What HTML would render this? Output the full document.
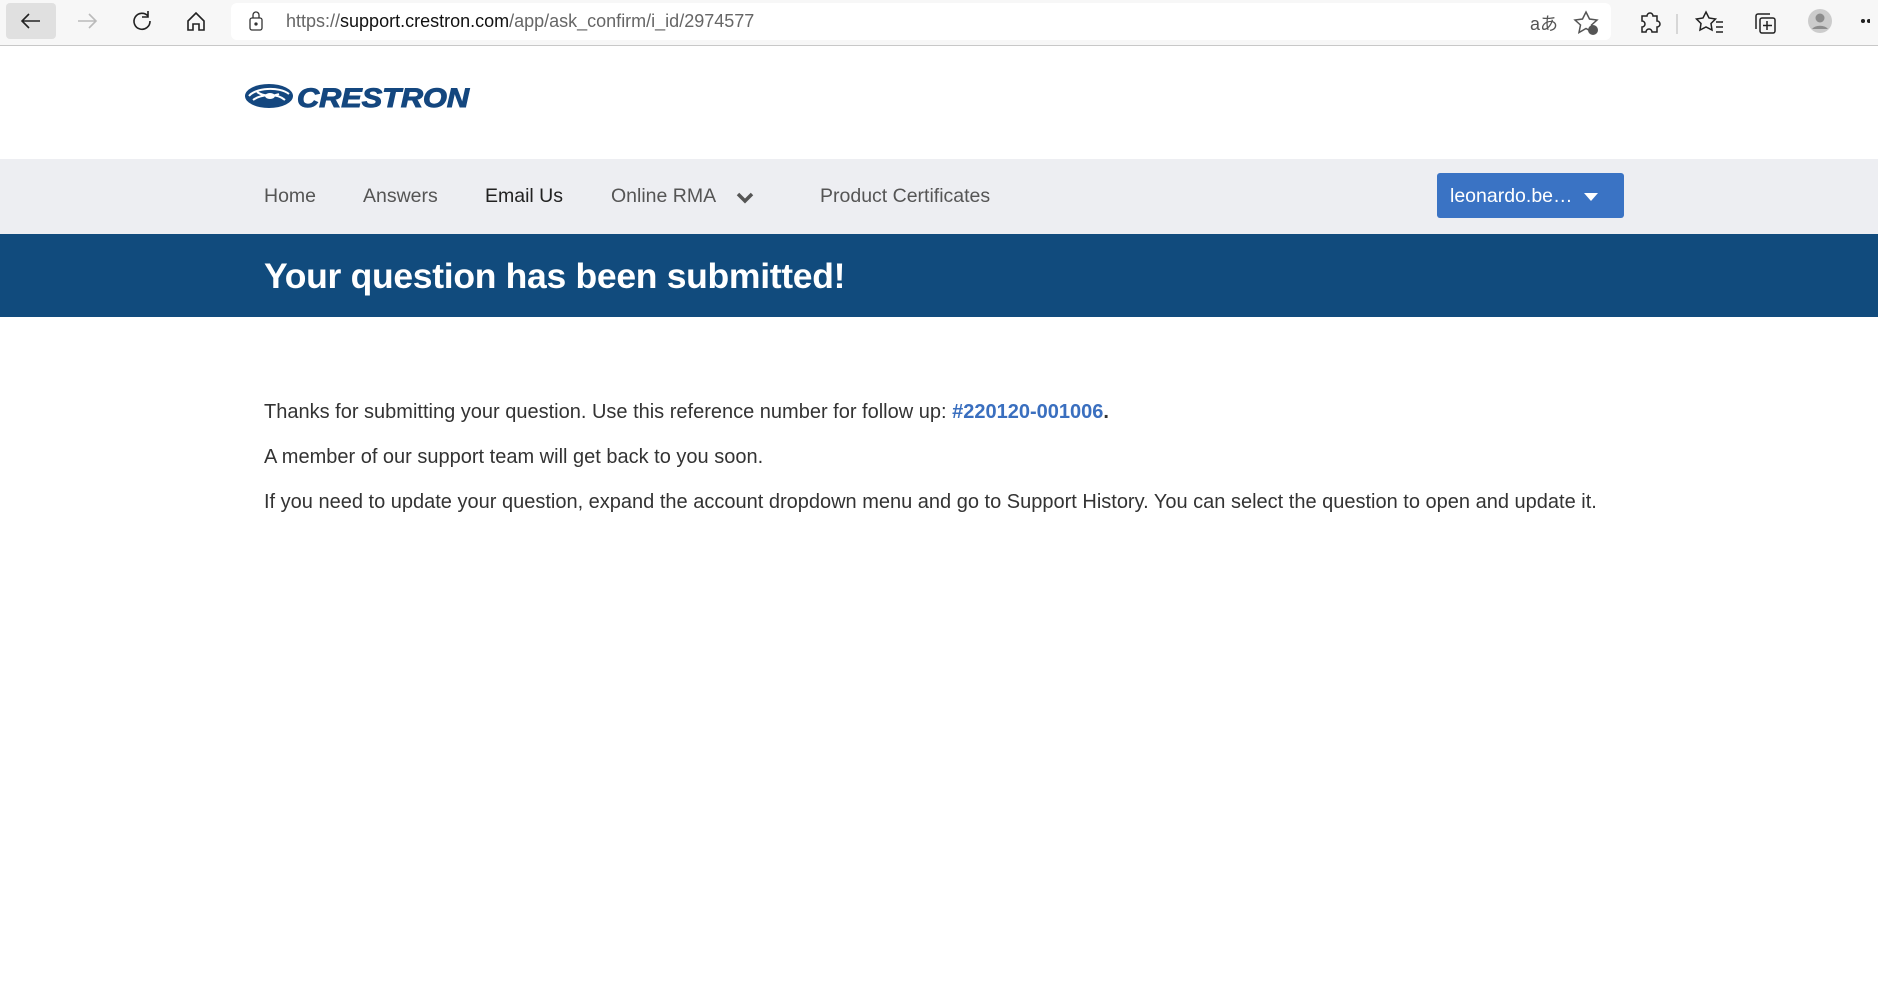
<!DOCTYPE html>
<html><head><meta charset="utf-8"><style>
*{margin:0;padding:0;box-sizing:border-box}
body{width:1878px;height:988px;overflow:hidden;background:#fff;font-family:"Liberation Sans",Arial,sans-serif;position:relative}
.abs{position:absolute}
.tb{left:0;top:0;width:1878px;height:46px;background:#f7f7f7;border-bottom:1px solid #c8c8c8}
.addr{left:231px;top:3px;width:1380px;height:37px;background:#fff;border-radius:6px}
.nav{left:0;top:159px;width:1878px;height:75px;background:#edeef2}
.nav span{position:absolute;top:26px;font-size:19.5px;color:#555}
.banner{left:0;top:234px;width:1878px;height:83px;background:#114b7d}
.banner h1{position:absolute;left:264px;top:22px;color:#fff;font-size:35.5px;font-weight:bold;letter-spacing:-0.3px}
.p{left:264px;font-size:20px;color:#333;white-space:nowrap}
</style></head><body>
<div class="abs tb"></div>
<div class="abs" style="left:6px;top:3px;width:50px;height:36px;background:#e0e0e0;border-radius:4px"></div>
<svg class="abs" style="left:0;top:0" width="230" height="45" fill="none" stroke="#222" stroke-width="1.6">
<path d="M40 21H22M29 14l-7 7 7 7"/>
<path d="M96 21H78M89 14l7 7-7 7" stroke="#bbb"/>
<path d="M148 16a8 8 0 1 0 2 5M148 11v6h-6"/>
<path d="M188 21l8-8 8 8v9h-5v-6h-6v6h-5z"/>
</svg>
<div class="abs addr"></div>
<svg class="abs" style="left:248px;top:10px" width="16" height="22" fill="none" stroke="#333" stroke-width="1.3"><rect x="2" y="8" width="12" height="12" rx="2"/><path d="M5 8V5a3 3 0 0 1 6 0v3"/><circle cx="8" cy="14" r="1" fill="#333"/></svg>
<div class="abs" style="left:286px;top:11px;font-size:18px;color:#666">https://<span style="color:#111">support.crestron.com</span>/app/ask_confirm/i_id/2974577</div>
<div class="abs" style="left:1530px;top:10px;font-size:18px;color:#555">aあ</div>
<svg class="abs" style="left:1570px;top:8px" width="300" height="32" fill="none" stroke="#222" stroke-width="1.5">
<path d="M16 4l3.5 7 7.5 1-5.5 5 1.5 7.5-7-4-7 4 1.5-7.5-5.5-5 7.5-1z" stroke="#555"/><circle cx="23" cy="22" r="5" fill="#555" stroke="none"/>
<path d="M72 8h5a3 3 0 0 1 6 0h4v5a3 3 0 0 1 0 6v5h-5a3 3 0 0 0-6 0h-4v-5a3 3 0 0 0 0-6z"/>
<path d="M107 6v20" stroke="#ccc"/>
<path d="M136 4l3 6 6.5 1-4.5 4.5 1 6.5-6-3-6 3 1-6.5-4.5-4.5 6.5-1z"/><path d="M146 14h7M146 19h7M146 24h7"/>
<rect x="190" y="10" width="15" height="15" rx="2"/><path d="M186 21V8a2 2 0 0 1 2-2h12M197 13v9M193 17.5h9"/>
<circle cx="250" cy="13" r="12" fill="#ccc" stroke="none"/><circle cx="250" cy="10" r="4.5" fill="#8c8c8c" stroke="none"/><path d="M242 21a9 6 0 0 1 16 0" fill="#8c8c8c" stroke="none"/>
<circle cx="293" cy="13" r="1.3" fill="#222"/><circle cx="299" cy="13" r="1.3" fill="#222"/>
</svg>
<svg class="abs" style="left:243px;top:80px" width="240" height="32">
<ellipse cx="26" cy="16" rx="24" ry="12" fill="#14477f"/>
<path d="M6 16c6-8 30-10 40-2M10 20c8-6 24-7 32 0M14 12c6 4 14 5 22 2" stroke="#fff" stroke-width="2" fill="none"/>
<ellipse cx="27" cy="16" rx="5" ry="3" fill="#fff"/>
<text x="54" y="27" font-family="Liberation Sans" font-weight="bold" font-style="italic" font-size="27" fill="#14477f" stroke="#14477f" stroke-width="1" textLength="172" lengthAdjust="spacingAndGlyphs">CRESTRON</text>
</svg>
<div class="abs nav">
<span style="left:264px">Home</span>
<span style="left:363px">Answers</span>
<span style="left:485px;color:#222">Email Us</span>
<span style="left:611px">Online RMA</span>
<svg style="position:absolute;left:736px;top:32px" width="18" height="14" fill="none" stroke="#555" stroke-width="3.5"><path d="M2 3l7 7 7-7"/></svg>
<span style="left:820px">Product Certificates</span>
<div style="position:absolute;left:1437px;top:14px;width:187px;height:45px;background:#3a73c4;border-radius:3px;color:#fff;font-size:19.5px;padding:12px 0 0 13px">leonardo.be…<svg style="position:absolute;left:147px;top:20px" width="14" height="8"><path d="M0 0h14L7 8z" fill="#fff"/></svg></div>
</div>
<div class="abs banner"><h1>Your question has been submitted!</h1></div>
<div class="abs p" style="top:401px">Thanks for submitting your question. Use this reference number for follow up: <b style="color:#3a6fbf">#220120-001006</b><b>.</b></div>
<div class="abs p" style="top:446px">A member of our support team will get back to you soon.</div>
<div class="abs p" style="top:491px">If you need to update your question, expand the account dropdown menu and go to Support History. You can select the question to open and update it.</div>
</body></html>
